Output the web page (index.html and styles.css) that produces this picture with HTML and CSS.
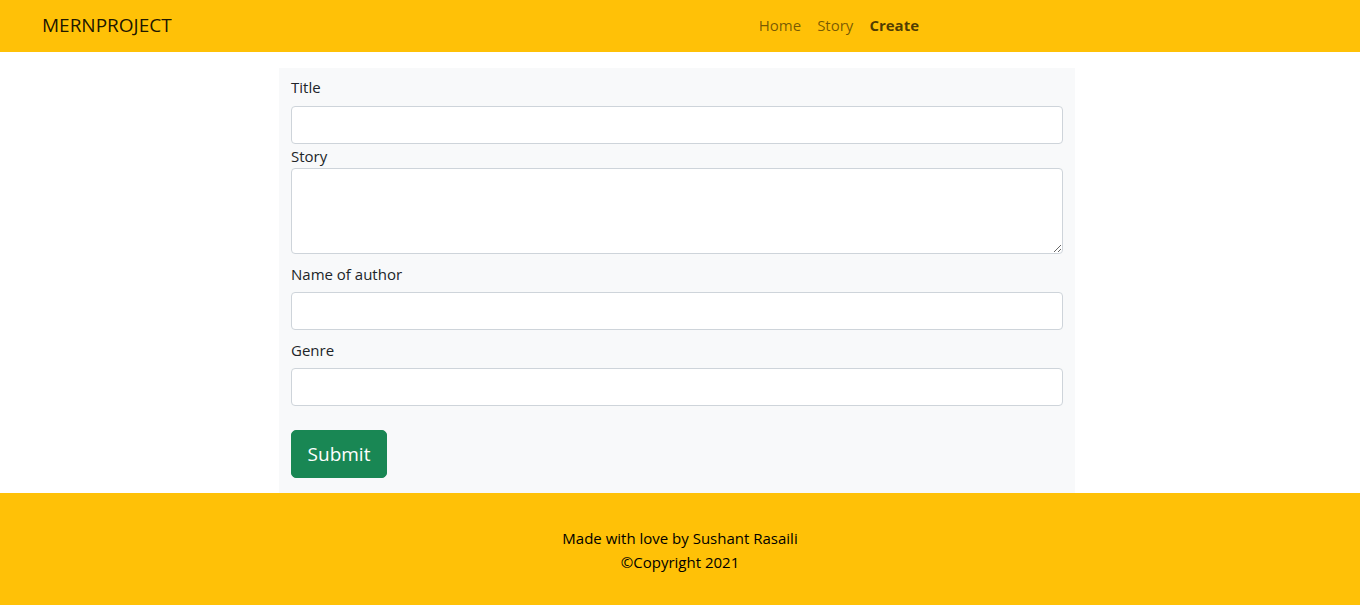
FILE: index.html
```html
<!DOCTYPE html>
<html lang="en">
<head>
<meta charset="utf-8">
<title>MERNPROJECT</title>
<link rel="stylesheet" href="styles.css">
</head>
<body>
<nav class="navbar">
  <a class="brand" href="#">MERNPROJECT</a>
  <ul class="nav-links">
    <li><a href="#" class="nav-link">Home</a></li>
    <li><a href="#" class="nav-link">Story</a></li>
    <li><a href="#" class="nav-link active">Create</a></li>
  </ul>
</nav>
<main class="main">
  <form class="story-form">
    <label class="form-label first">Title</label>
    <input class="form-control" type="text">
    <label class="form-label tight">Story</label>
    <textarea class="form-control area" rows="3"></textarea>
    <label class="form-label">Name of author</label>
    <input class="form-control" type="text">
    <label class="form-label">Genre</label>
    <input class="form-control" type="text">
    <div class="actions"><button type="button" class="btn-submit">Submit</button></div>
  </form>
</main>
<footer class="footer">
  <p>Made with love by Sushant Rasaili</p>
  <p>©Copyright 2021</p>
</footer>
</body>
</html>
```
FILE: styles.css
```css
* { box-sizing: border-box; }
html, body { margin: 0; padding: 0; }
body {
  font-family: "Open Sans", "Noto Sans", sans-serif;
  font-size: 15px;
  line-height: 24px;
  color: #212529;
  background: #fff;
}
.navbar {
  height: 52px;
  background: #ffc107;
  display: flex;
  align-items: center;
  padding: 0 0 3px 42px;
}
.brand {
  font-size: 19px;
  color: rgba(0,0,0,.9);
  text-decoration: none;
  line-height: 30px;
}
.nav-links {
  list-style: none;
  margin: 0 0 0 579px;
  padding: 0;
  display: flex;
}
.nav-link {
  display: block;
  padding: 8px 8px;
  color: rgba(0,0,0,.55);
  text-decoration: none;
  font-size: 15px;
}
.nav-link.active { font-weight: 700; color: rgba(0,0,0,.7); }
.main {
  display: flex;
  justify-content: center;
  padding-top: 16px;
}
.story-form {
  width: 796px;
  margin-left: -6px;
  background: #f8f9fa;
  padding: 7px 12px 15px;
  display: flex;
  flex-direction: column;
}
.form-label { display: block; margin: 8px 0 6px; }
.form-label.first { margin-top: 0; margin-bottom: 7px; }
.form-label.tight { margin: 0; }
.form-control {
  display: block;
  width: 100%;
  height: 38px;
  border: 1px solid #ced4da;
  border-radius: 4px;
  background: #fff;
  font: inherit;
  padding: 6px 12px;
}
.form-control.area { height: 86px; resize: vertical; }
.actions { margin-top: 24px; }
.btn-submit {
  height: 48px;
  width: 96px;
  background: #198754;
  border: 1px solid #198754;
  border-radius: 5px;
  color: #fff;
  font-family: inherit;
  font-size: 19px;
  padding: 0;
}
.footer {
  background: #ffc107;
  height: 112px;
  padding-top: 33px;
  text-align: center;
  color: #000;
}
.footer p { margin: 0; }
```
